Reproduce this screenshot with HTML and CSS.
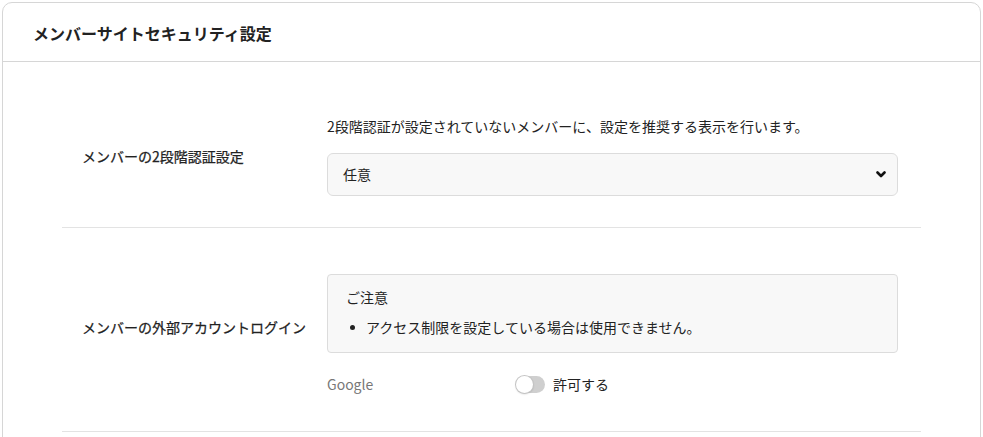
FILE: index.html
```html
<!DOCTYPE html>
<html lang="ja">
<head>
<meta charset="utf-8">
<title>メンバーサイトセキュリティ設定</title>
<link rel="stylesheet" href="styles.css">
</head>
<body>
<section class="card">
  <header class="card-header">
    <h2 class="card-title">メンバーサイトセキュリティ設定</h2>
  </header>
  <div class="card-body">
    <div class="row row-first">
      <div class="label">メンバーの2段階認証設定</div>
      <div class="field">
        <p class="desc">2段階認証が設定されていないメンバーに、設定を推奨する表示を行います。</p>
        <div class="select">
          <span class="select-value">任意</span>
          <svg class="chevron" width="10" height="7" viewBox="0 0 10 7"><path d="M1.5 1.5 L5 5 L8.5 1.5" fill="none" stroke="#111" stroke-width="2.6" stroke-linecap="round" stroke-linejoin="round"/></svg>
        </div>
      </div>
    </div>
    <div class="row row-second">
      <div class="label label-second">メンバーの外部アカウントログイン</div>
      <div class="field">
        <div class="notice">
          <div class="notice-title">ご注意</div>
          <ul class="notice-list">
            <li>アクセス制限を設定している場合は使用できません。</li>
          </ul>
        </div>
        <div class="provider">
          <span class="provider-name">Google</span>
          <span class="toggle"><span class="knob"></span></span>
          <span class="toggle-label">許可する</span>
        </div>
      </div>
    </div>
  </div>
</section>
</body>
</html>
```

FILE: styles.css
```css
html, body {
  margin: 0;
  padding: 0;
  background: #fff;
}
body {
  font-family: "Noto Sans CJK JP", "Noto Sans", sans-serif;
  color: #222;
  font-size: 14px;
  line-height: 21px;
}
.card {
  margin: 2px 2px 0 2px;
  border: 1px solid #d6d6d6;
  border-radius: 10px;
  height: 480px;
  overflow: hidden;
}
.card-header {
  height: 58px;
  border-bottom: 1px solid #d6d6d6;
  display: flex;
  align-items: center;
  padding-left: 30px;
}
.card-title {
  margin: 0;
  font-size: 16px;
  font-weight: 700;
  line-height: 24px;
  color: #222;
  position: relative;
  top: 1px;
}
.card-body {
  padding: 0 59px;
}
.row {
  display: flex;
  align-items: center;
  border-bottom: 1px solid #e3e3e3;
}
.row-first {
  padding: 54px 0 31px;
}
.row-second {
  padding: 46px 0 36px;
}
.label {
  width: 245px;
  padding-left: 20px;
  font-weight: 400;
  -webkit-text-stroke: 0.25px #222;
  flex-shrink: 0;
}
.label-second {
  padding-bottom: 14px;
}
.field {
  width: 571px;
}
.desc {
  margin: 0 0 16px;
}
.select {
  height: 41px;
  border: 1px solid #dcdcdc;
  border-radius: 6px;
  background: #f8f8f8;
  display: flex;
  align-items: center;
  justify-content: space-between;
  padding: 0 11px 0 15px;
}
.select-value {
  font-weight: 400;
}
.chevron {
  display: block;
}
.notice {
  border: 1px solid #dcdcdc;
  border-radius: 4px;
  background: #f8f8f8;
  padding: 12px 21px 14px 18px;
}
.notice-title {
  line-height: 21px;
}
.notice-list {
  margin: 9px 0 0;
  padding-left: 0;
  list-style: none;
}
.notice-list li {
  line-height: 21px;
  display: flex;
  align-items: center;
}
.notice-list li::before {
  content: "";
  width: 5px;
  height: 5px;
  border-radius: 50%;
  background: #222;
  margin: 0 11px 0 4px;
  flex-shrink: 0;
}
.provider {
  display: flex;
  align-items: center;
  margin-top: 21px;
}
.provider-name {
  width: 189px;
  color: #777;
}
.toggle {
  width: 29px;
  height: 17px;
  border-radius: 9px;
  background: #cfcfcf;
  position: relative;
  margin-right: 8px;
}
.knob {
  position: absolute;
  left: 0;
  top: 0;
  width: 17px;
  height: 17px;
  border-radius: 50%;
  background: #fff;
  box-shadow: 0 0 0 1px #c4c4c4, 0 1px 2px rgba(0,0,0,0.25);
  box-sizing: border-box;
}
.toggle-label {
  color: #222;
}
```
